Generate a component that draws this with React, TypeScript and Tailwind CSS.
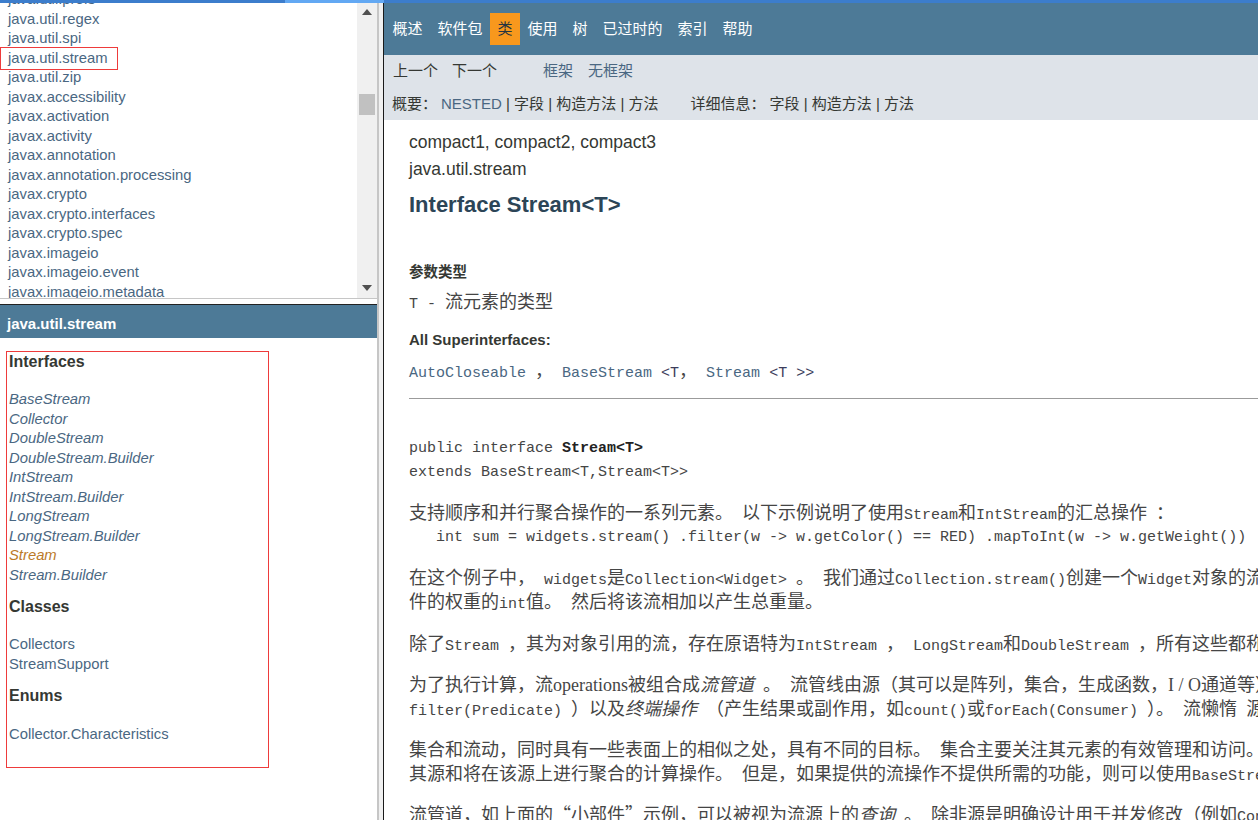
import type { ReactNode } from 'react';

const packages = [
  'java.util.prefs',
  'java.util.regex',
  'java.util.spi',
  'java.util.stream',
  'java.util.zip',
  'javax.accessibility',
  'javax.activation',
  'javax.activity',
  'javax.annotation',
  'javax.annotation.processing',
  'javax.crypto',
  'javax.crypto.interfaces',
  'javax.crypto.spec',
  'javax.imageio',
  'javax.imageio.event',
  'javax.imageio.metadata',
  'javax.imageio.plugins.bmp',
];

const interfaces = [
  'BaseStream',
  'Collector',
  'DoubleStream',
  'DoubleStream.Builder',
  'IntStream',
  'IntStream.Builder',
  'LongStream',
  'LongStream.Builder',
  'Stream',
  'Stream.Builder',
];

const navItems = ['概述', '软件包', '类', '使用', '树', '已过时的', '索引', '帮助'];

// SimSun-like mix: half-width latin runs in mono, CJK in Noto
function M({ children }: { children: string }) {
  const parts = children.split(/([\x20-\x7E]+)/);
  return (
    <>
      {parts.map((p, i) =>
        p === '' ? null : /^[\x20-\x7E]+$/.test(p) ? (
          <span key={i} className="font-['Liberation_Mono',monospace] text-[15px]">
            {p}
          </span>
        ) : (
          <span key={i} className="font-['Noto_Sans_CJK_SC',sans-serif] text-[18px]">
            {p}
          </span>
        )
      )}
    </>
  );
}

function Line({ children, className = '' }: { children: ReactNode; className?: string }) {
  return <div className={`shrink-0 h-[24px] leading-[24px] whitespace-pre ${className}`}>{children}</div>;
}

function Scrollbar() {
  return (
    <div className="w-[20px] shrink-0 bg-[#f0f0f0] flex flex-col items-center">
      <div className="shrink-0 h-[18px] flex items-center justify-center">
        <svg width="10" height="6" viewBox="0 0 10 6">
          <path d="M0 6 L5 0 L10 6 Z" fill="#505050" />
        </svg>
      </div>
      <div className="shrink-0 mt-[73px] h-[21px] w-[16px] bg-[#c1c1c1]" />
      <div className="flex-1" />
      <div className="shrink-0 h-[18px] mb-[1px] flex items-center justify-center">
        <svg width="10" height="6" viewBox="0 0 10 6">
          <path d="M0 0 L10 0 L5 6 Z" fill="#505050" />
        </svg>
      </div>
    </div>
  );
}

function LeftFrame() {
  return (
    <div className="w-[377px] shrink-0 flex flex-col font-['Liberation_Sans',Arial,sans-serif]">
      {/* package list */}
      <div className="shrink-0 h-[295px] flex overflow-hidden">
        <div className="flex-1 overflow-hidden">
          <div className="-mt-[13px] text-[14.8px] leading-[19.5px] text-[#4a6782]">
            {packages.map((p) => (
              <div key={p} className="relative pl-[8px] whitespace-nowrap">
                {p}
                {p === 'java.util.stream' && (
                  <span className="absolute left-0 -top-[2px] w-[118px] h-[23px] border border-[#ee3b3b]" />
                )}
              </div>
            ))}
          </div>
        </div>
        <Scrollbar />
      </div>
      <div className="shrink-0 h-px bg-[#c6c6c6]" />
      <div className="shrink-0 h-[5px] bg-white" />
      <div className="shrink-0 h-px bg-[#222]" />
      <div className="shrink-0 h-[33px] bg-[#4d7a97] flex items-center pl-[7px] pt-[5px] text-white font-bold text-[15px]">
        java.util.stream
      </div>

      {/* class list */}
      <div className="flex-1 bg-white">
        <div className="ml-[6px] mt-[13px] w-[263px] h-[417px] border border-[#ee3b3b] pl-[2px] text-[14.8px] leading-[19.5px]">
          <div className="h-[20px] leading-[20px] font-bold text-[16px] text-[#353833]">Interfaces</div>
          <div className="mt-[18px]">
            {interfaces.map((c) => (
              <div key={c} className={c === 'Stream' ? 'italic text-[#bb7a2a]' : 'italic text-[#4a6782]'}>
                {c}
              </div>
            ))}
          </div>
          <div className="mt-[12px] h-[20px] leading-[20px] font-bold text-[16px] text-[#353833]">Classes</div>
          <div className="mt-[18px] text-[#4a6782]">
            <div>Collectors</div>
            <div>StreamSupport</div>
          </div>
          <div className="mt-[12px] h-[20px] leading-[20px] font-bold text-[16px] text-[#353833]">Enums</div>
          <div className="mt-[19px] text-[#4a6782]">Collector.Characteristics</div>
        </div>
      </div>
    </div>
  );
}

function Separator() {
  return (
    <div className="flex shrink-0">
      <div className="w-[2px] bg-[#c6c6c6]" />
      <div className="w-[4px] bg-[#f0f0f0]" />
      <div className="w-[1px] bg-[#1a1a1a]" />
    </div>
  );
}

const mono = "font-['Liberation_Mono',monospace] text-[15px]";

function RightFrame() {
  return (
    <div className="flex-1 min-w-0 overflow-hidden flex flex-col bg-white">
      {/* top nav */}
      <div className="shrink-0 h-[52px] bg-[#4d7a97] flex items-center pl-[1px] font-['Liberation_Sans','Noto_Sans_CJK_SC',sans-serif] text-[15px]">
        {navItems.map((n) =>
          n === '类' ? (
            <div key={n} className="h-[32px] px-[7.5px] bg-[#f8981d] text-[#253441] flex items-center">
              {n}
            </div>
          ) : (
            <div key={n} className="px-[7.5px] text-white">
              {n}
            </div>
          )
        )}
      </div>

      {/* sub nav */}
      <div className="shrink-0 h-[65px] bg-[#dee3e9] font-['Liberation_Sans','Noto_Sans_CJK_SC',sans-serif] text-[15px] text-[#353833] whitespace-pre">
        <div className="h-[32px] flex items-center pl-[9px]">
          <span>上一个</span>
          <span className="ml-[14px]">下一个</span>
          <span className="ml-[46px] text-[#4a6782]">框架</span>
          <span className="ml-[15px] text-[#4a6782]">无框架</span>
        </div>
        <div className="h-[33px] flex items-center pl-[8px] pt-[1px]">
          <span>概要：</span>
          <span className="ml-[4px] text-[#4a6782]">NESTED</span>
          <span>{' | 字段 | 构造方法 | 方法'}</span>
          <span className="ml-[32px]">详细信息：</span>
          <span className="ml-[4px]">{'字段 | 构造方法 | 方法'}</span>
        </div>
      </div>

      {/* content */}
      <div className="shrink-0 pl-[25px] text-[#454545]">
        <div className="mt-[10px] h-[24px] leading-[24px] font-['Liberation_Sans',Arial,sans-serif] text-[17.5px] text-[#353833]">
          compact1, compact2, compact3
        </div>
        <div className="mt-[3px] h-[24px] leading-[24px] font-['Liberation_Sans',Arial,sans-serif] text-[17.5px] text-[#353833]">
          java.util.stream
        </div>
        <div className="mt-[9px] h-[30px] leading-[30px] font-['Liberation_Sans',Arial,sans-serif] font-bold text-[22px] text-[#2c4557]">
          Interface Stream&lt;T&gt;
        </div>
        <div className="mt-[41px] h-[20px] leading-[20px] font-['Noto_Sans_CJK_SC',sans-serif] font-bold text-[14.5px] text-[#353833]">
          参数类型
        </div>
        <Line className="mt-[7px]">
          <M>T - 流元素的类型</M>
        </Line>
        <div className="mt-[18px] h-[20px] leading-[20px] font-['Liberation_Sans',Arial,sans-serif] font-bold text-[15px] text-[#353833]">
          All Superinterfaces:
        </div>
        <Line className="mt-[7px]">
          <span className={`${mono} text-[#4a6782]`}>AutoCloseable</span>
          <M> ， </M>
          <span className={`${mono} text-[#4a6782]`}>BaseStream</span>
          <span className={`${mono} text-[#3d3d5c]`}> &lt;T</span>
          <M>， </M>
          <span className={`${mono} text-[#4a6782]`}>Stream</span>
          <span className={`${mono} text-[#3d3d5c]`}> &lt;T &gt;&gt;</span>
        </Line>
        <div className="mt-[17px] h-px bg-[#9b9b9b]" />

        <Line className="mt-[35px]">
          <span className={mono}>public interface </span>
          <span className={`${mono} font-bold text-[#222]`}>Stream&lt;T&gt;</span>
        </Line>
        <Line>
          <span className={mono}>extends BaseStream&lt;T,Stream&lt;T&gt;&gt;</span>
        </Line>

        <Line className="mt-[17px]">
          <M>支持顺序和并行聚合操作的一系列元素。 以下示例说明了使用Stream和IntStream的汇总操作 ：</M>
        </Line>
        <Line className="h-[25px] leading-[25px]">
          <M>   int sum = widgets.stream() .filter(w -&gt; w.getColor() == RED) .mapToInt(w -&gt; w.getWeight()) .sum();</M>
        </Line>

        <Line className="mt-[16px]">
          <M>在这个例子中， widgets是Collection&lt;Widget&gt; 。 我们通过Collection.stream()创建一个Widget对象的流，过滤它以产生仅包含红色小部件的流，然后将其转换为表示每个红色小部</M>
        </Line>
        <Line>
          <M>件的权重的int值。 然后将该流相加以产生总重量。</M>
        </Line>

        <Line className="mt-[18px]">
          <M>除了Stream ，其为对象引用的流，存在原语特为IntStream ， LongStream和DoubleStream ，所有这些都称为“流”和符合此处描述的特征和限制。</M>
        </Line>

        <Line className="mt-[17px]">
          <M>为了执行计算，流</M>
          <span className="font-['Liberation_Serif',serif] text-[18px]">operations</span>
          <M>被组合成</M>
          <em>
            <M>流管道</M>
          </em>
          <M> 。 流管线由源（其可以是阵列，集合，生成函数，</M>
          <span className="font-['Liberation_Serif',serif] text-[18px]">I / O</span>
          <M>通道等），零个或多个</M>
          <em>
            <M>中间操作</M>
          </em>
          <M> （其将流转换成另一个流，例如</M>
        </Line>
        <Line>
          <M>filter(Predicate) ）以及</M>
          <em>
            <M>终端操作</M>
          </em>
          <M> （产生结果或副作用，如count()或forEach(Consumer) ）。 流懒惰 源数据上的计算仅在终端操作启动时执行，源元素仅在需要时才被消耗。</M>
        </Line>

        <Line className="mt-[17px]">
          <M>集合和流动，同时具有一些表面上的相似之处，具有不同的目标。 集合主要关注其元素的有效管理和访问。 相比之下，流不提供直接访问或操纵其元素的手段，而是关注声明性地描述</M>
        </Line>
        <Line>
          <M>其源和将在该源上进行聚合的计算操作。 但是，如果提供的流操作不提供所需的功能，则可以使用BaseStream.iterator()和BaseStream.spliterator()操作来执行受控遍历。</M>
        </Line>

        <Line className="mt-[17px]">
          <M>流管道，如上面的“小部件”示例，可以被视为流源上的</M>
          <em>
            <M>查询</M>
          </em>
          <M> 。 除非源是明确设计用于并发修改（例如ConcurrentHashMap ），否则在查询流源时可能会导致不可预测或错误的行为。</M>
        </Line>
      </div>
    </div>
  );
}

export default function App() {
  return (
    <div className="w-[1258px] h-[820px] overflow-hidden flex flex-col bg-white">
      <div className="h-[3px] flex shrink-0">
        <div className="w-[285px] bg-[#3c7dcc]" />
        <div className="w-[99px] bg-[#62a8f3]" />
        <div className="flex-1 bg-[#3c7dcc]" />
      </div>
      <div className="flex flex-1 min-h-0">
        <LeftFrame />
        <Separator />
        <RightFrame />
      </div>
    </div>
  );
}
